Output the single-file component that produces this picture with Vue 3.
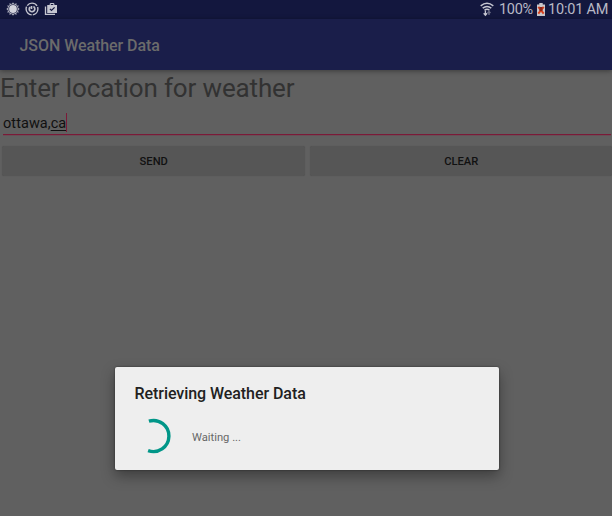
<script setup>
import { ref } from 'vue'
const location = ref(['ottawa,', 'ca'])
const actions = ['SEND', 'CLEAR']
const rays = Array.from({ length: 12 }, (_, i) => i * 30)
</script>

<template>
  <div class="screen">
    <header class="status">
      <div class="notifications">
        <svg width="14" height="14" viewBox="0 0 14 14">
          <path v-for="a in rays" :key="a" d="M7 .2 L8 2 H6Z" fill="#c5c6d0" :transform="`rotate(${a} 7 7)`" />
          <circle cx="7" cy="7" r="5" fill="none" stroke="#c5c6d0" stroke-width=".7" />
          <circle cx="7" cy="7" r="3.9" fill="#d2d3dc" />
        </svg>
        <svg width="14" height="14" viewBox="0 0 14 14" fill="none" stroke="#c0c1cc">
          <circle cx="7" cy="7" r="5.9" stroke-width="1.4" stroke-dasharray="11.2 1.15" stroke-dashoffset="3" />
          <path d="M5 5A2.8 2.8 0 1 0 8.4 4.5M6.5 4V7" stroke-width="1.7" />
        </svg>
        <svg width="14" height="14" viewBox="0 0 14 14">
          <path d="M1.5 4.5V12.4H11" fill="none" stroke="#c5c6d0" stroke-width="1.3" />
          <path fill="#c5c6d0" fill-rule="evenodd" d="M3.2 3H5.7V1.8L6.6 1H9.5L10.4 1.8V3H13V11H3.2ZM6.8 3H9.3V2H6.8Z" />
          <path d="M5.9 6.9 7.5 8.5 10.6 5.4" fill="none" stroke="#14183f" stroke-width="1.2" />
        </svg>
      </div>
      <div class="system">
        <svg class="wifi" width="14" height="16" viewBox="0 0 14 16" fill="none">
          <path d="M.7 3.8Q7 -1.2 13.3 3.8M2.7 6.2Q7 2.7 11.3 6.2M4.5 8.3Q7 6.2 9.5 8.3" stroke="#c5c6d0" stroke-width="1.5" />
          <path d="M5.4 8.5V13M3.7 11.3 5.4 13.2 7.1 11.3" stroke="#c5c6d0" stroke-width="1.3" />
          <path d="M9 13V9.5M7.5 11 9 9.5 10.5 11" stroke="#686a83" stroke-width="1.4" />
        </svg>
        <span class="percent">100%</span>
        <svg class="battery" width="8" height="13" viewBox="0 0 8 13">
          <path d="M2.3 0H5.7V1.5H8V13H0V1.5H2.3Z" fill="#c8c7cc" />
          <path d="M1.3 3.8 6.7 10.6M6.7 3.8 1.3 10.6" stroke="#d8401d" stroke-width="2" />
          <path d="M2.5 4H5.5V8H2.5Z" fill="#8c2417" />
        </svg>
        <span class="clock">10:01 AM</span>
      </div>
    </header>
    <div class="appbar"><h1>JSON Weather Data</h1></div>
    <main>
      <label for="place">Enter location for weather</label>
      <div id="place" class="field"><span>{{ location[0] }}</span><span class="typing">{{ location[1] }}</span><i class="caret"></i></div>
      <div class="buttons">
        <button v-for="action in actions" :key="action">{{ action }}</button>
      </div>
    </main>
    <section class="dialog" role="dialog">
      <h2>Retrieving Weather Data</h2>
      <div class="progress">
        <svg width="38" height="38" viewBox="0 0 38 38">
          <path d="M13.9 4.2A15.5 15.5 0 1 1 13.1 33.6" fill="none" stroke="#009688" stroke-width="3.4" />
        </svg>
        <span>Waiting ...</span>
      </div>
    </section>
  </div>
</template>

<style>
body { margin: 0; overflow: hidden; }
</style>
<style scoped>
* { box-sizing: border-box; }
.screen { position: relative; width: 612px; height: 516px; background: #606060; font-family: Roboto, sans-serif; overflow: hidden; }
.status { height: 19px; background: #13173e; display: flex; justify-content: space-between; color: #b8b9c5; }
.notifications { display: flex; gap: 5px; padding: 2px 0 0 6px; }
.notifications svg { display: block; }
.system { display: flex; align-items: flex-start; padding-right: 4px; font-size: 14.5px; font-weight: 400; line-height: 20px; white-space: nowrap; }
.wifi { margin: 2px 5px 0 0; }
.percent { width: 38px; letter-spacing: -.3px; }
.battery { margin: 3px 3px 0 0; }
.clock { width: 60px; letter-spacing: -.2px; }
.appbar { position: relative; height: 51px; background: #1a1e4a; display: flex; align-items: center; padding: 2px 0 0 19.5px; box-shadow: 0 1px 5px rgba(0, 0, 0, .4); }
h1 { margin: 0; font-size: 16px; font-weight: 500; letter-spacing: -.06px; color: #6b6b6b; line-height: 20px; }
main { display: flex; flex-direction: column; }
label { height: 37px; font-size: 26px; line-height: 37px; letter-spacing: -.14px; color: #323232; white-space: nowrap; }
.field { height: 28px; margin: 0 1px 0 3px; border-bottom: 1px solid #7b1a38; box-shadow: 0 1px rgba(123, 26, 56, .25); display: flex; align-items: flex-start; padding-top: 6px; font-size: 14.5px; line-height: 22px; letter-spacing: .06px; color: #101010; }
.typing { text-decoration: underline; text-decoration-thickness: 1px; text-underline-offset: 2px; }
.caret { width: 1px; height: 19px; background: #7b1a38; }
.buttons { display: flex; gap: 5px; padding: 11px 0 0 2px; }
button { flex: 1; height: 30px; border: 0; border-radius: 2px; background: #565656; color: #111; font: 500 11.2px/30px Roboto, sans-serif; padding: 1px 0 0 1px; box-shadow: 0 0 1px rgba(0, 0, 0, .2); }
.dialog { position: absolute; left: 115px; top: 367px; width: 384px; height: 103px; background: #eee; border-radius: 2px; padding: 17px 20px; box-shadow: 0 0 2px rgba(0, 0, 0, .55), 0 6px 14px rgba(0, 0, 0, .36); }
h2 { margin: 0 0 0 -.5px; font-size: 16px; line-height: 20px; font-weight: 500; letter-spacing: -.06px; color: #212121; white-space: nowrap; }
.progress { display: flex; align-items: center; margin-top: 13px; }
.progress span { margin-left: 19px; padding-top: 2px; font-size: 11.2px; color: #686868; }
</style>
